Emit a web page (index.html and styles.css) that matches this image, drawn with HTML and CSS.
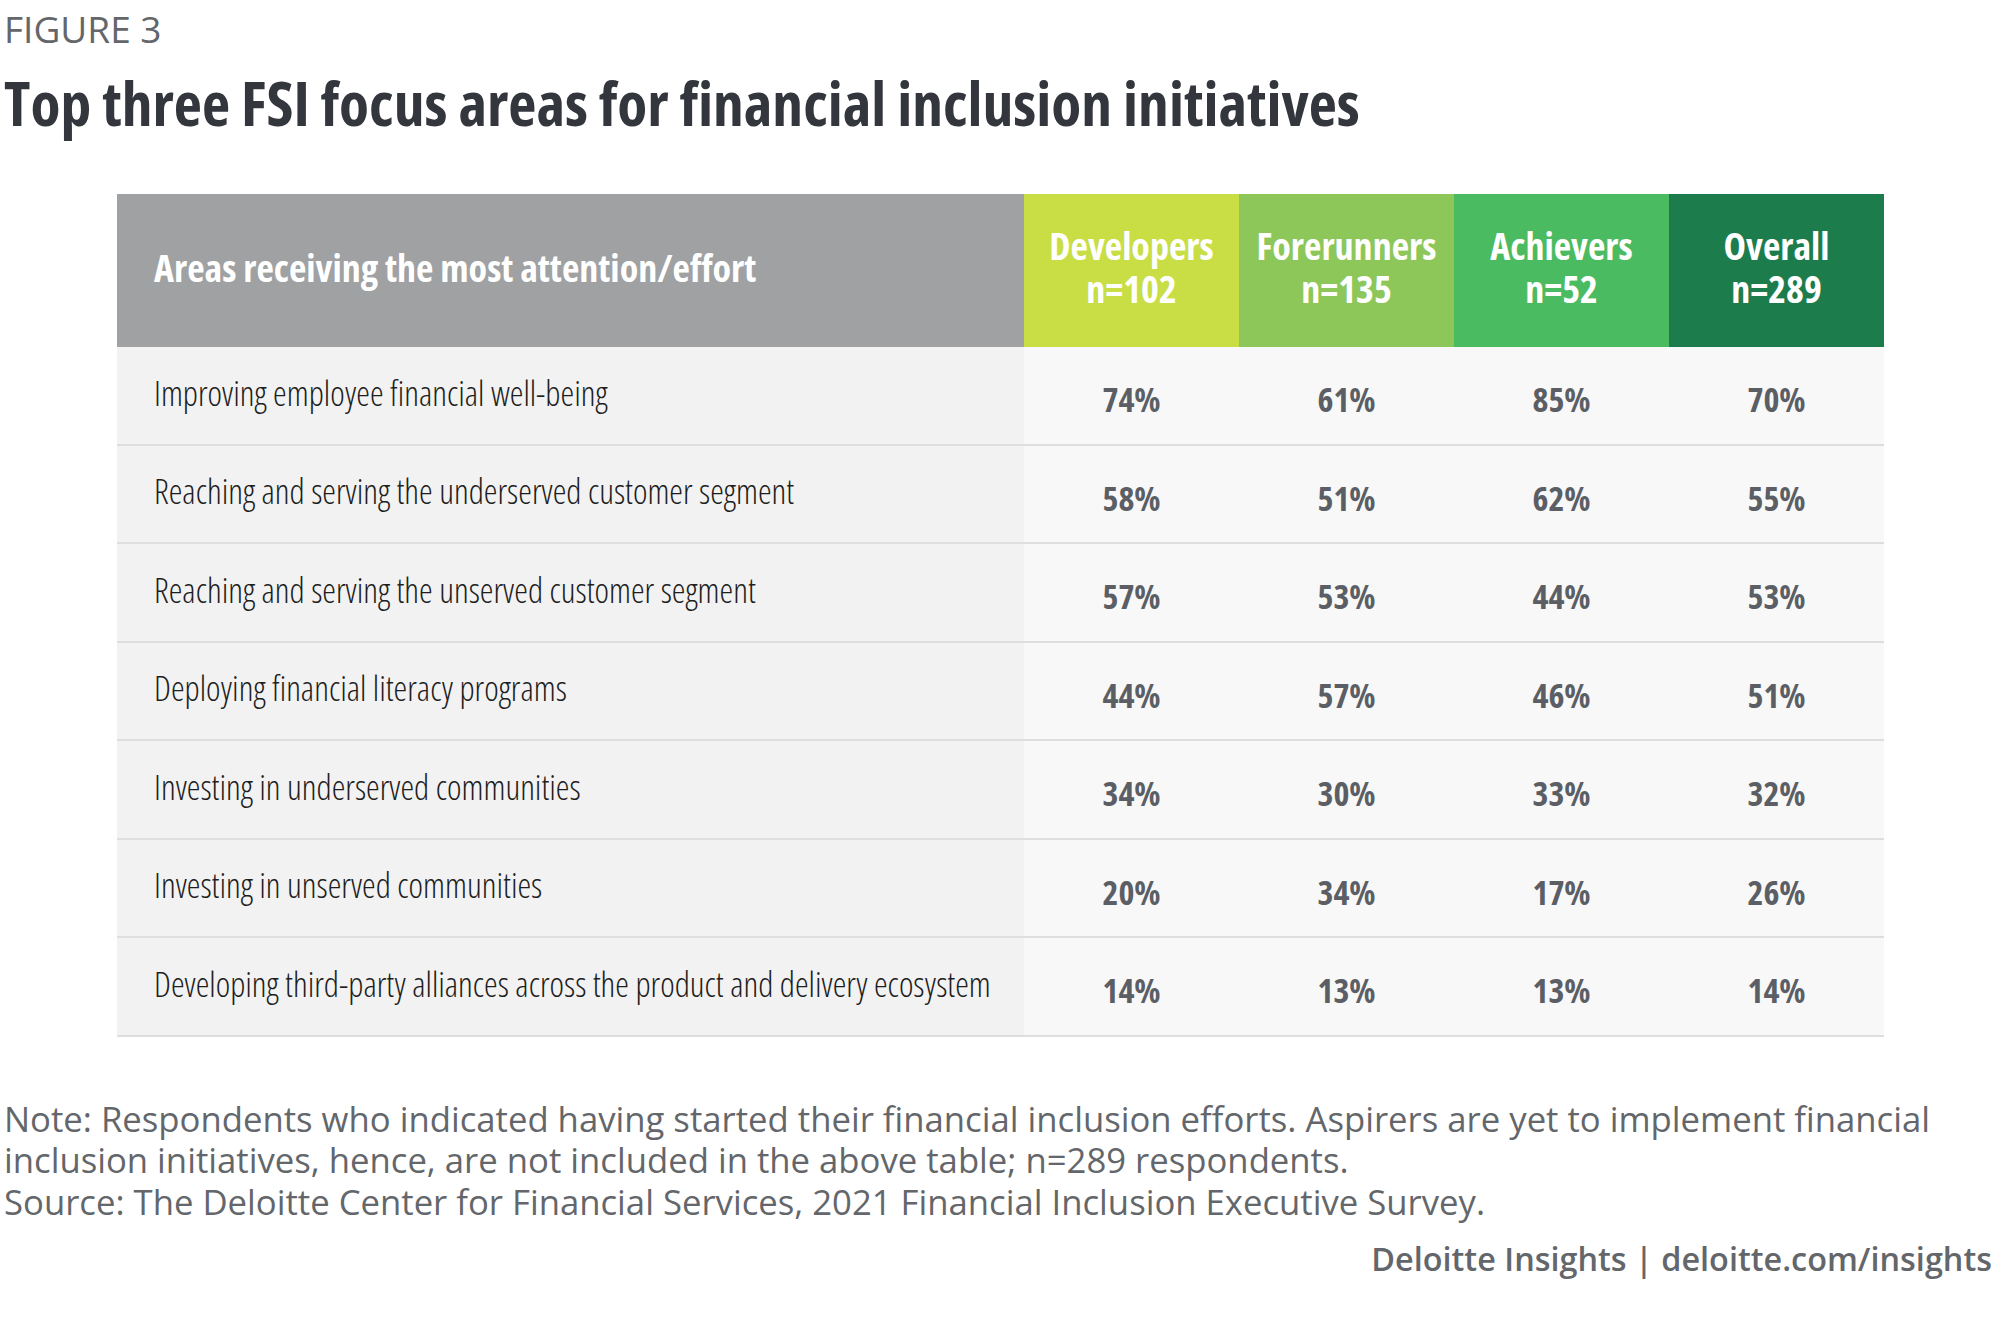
FILE: index.html
```html
<!DOCTYPE html>
<html lang="en">
<head>
<meta charset="utf-8">
<title>Figure 3</title>
<link rel="stylesheet" href="styles.css">
</head>
<body>
<div class="page">
  <div class="fig-label">FIGURE 3</div>
  <h1 class="title">Top three FSI focus areas for financial inclusion initiatives</h1>

  <div class="table">
    <div class="hcell hlabel">Areas receiving the most attention/effort</div>
    <div class="hcell hnum dev"><span>Developers</span><span>n=102</span></div>
    <div class="hcell hnum fore"><span>Forerunners</span><span>n=135</span></div>
    <div class="hcell hnum ach"><span>Achievers</span><span>n=52</span></div>
    <div class="hcell hnum all"><span>Overall</span><span>n=289</span></div>

    <div class="cell label">Improving employee financial well-being</div>
    <div class="cell num">74%</div><div class="cell num">61%</div><div class="cell num">85%</div><div class="cell num">70%</div>

    <div class="cell label">Reaching and serving the underserved customer segment</div>
    <div class="cell num">58%</div><div class="cell num">51%</div><div class="cell num">62%</div><div class="cell num">55%</div>

    <div class="cell label">Reaching and serving the unserved customer segment</div>
    <div class="cell num">57%</div><div class="cell num">53%</div><div class="cell num">44%</div><div class="cell num">53%</div>

    <div class="cell label">Deploying financial literacy programs</div>
    <div class="cell num">44%</div><div class="cell num">57%</div><div class="cell num">46%</div><div class="cell num">51%</div>

    <div class="cell label">Investing in underserved communities</div>
    <div class="cell num">34%</div><div class="cell num">30%</div><div class="cell num">33%</div><div class="cell num">32%</div>

    <div class="cell label">Investing in unserved communities</div>
    <div class="cell num">20%</div><div class="cell num">34%</div><div class="cell num">17%</div><div class="cell num">26%</div>

    <div class="cell label">Developing third-party alliances across the product and delivery ecosystem</div>
    <div class="cell num">14%</div><div class="cell num">13%</div><div class="cell num">13%</div><div class="cell num">14%</div>
  </div>

  <div class="notes">
    <p>Note: Respondents who indicated having started their financial inclusion efforts. Aspirers are yet to implement financial inclusion initiatives, hence, are not included in the above table; n=289 respondents.</p>
    <p>Source: The Deloitte Center for Financial Services, 2021 Financial Inclusion Executive Survey.</p>
  </div>

  <div class="credit">Deloitte Insights | deloitte.com/insights</div>
</div>
</body>
</html>
```

FILE: styles.css
```css
html, body {
  margin: 0;
  padding: 0;
  background: #ffffff;
}

body {
  font-family: "Open Sans", "Liberation Sans", sans-serif;
  width: 2000px;
  height: 1324px;
  overflow: hidden;
}

.page {
  padding: 0 8px 0 4px;
}

.fig-label {
  font-size: 37px;
  line-height: 40px;
  padding-top: 9px;
  color: #63666a;
  font-weight: 400;
}

.title {
  margin: 18px 0 0 0;
  font-size: 61.5px;
  line-height: 70px;
  font-weight: 700;
  font-stretch: 75%;
  color: #33363d;
}

.table {
  margin: 57px 0 0 113px;
  width: 1767px;
  display: grid;
  grid-template-columns: 907px 215px 215px 215px 215px;
  font-stretch: 75%;
}

.hcell {
  box-sizing: border-box;
  height: 153px;
  color: #ffffff;
  font-weight: 700;
  font-size: 38px;
  line-height: 43px;
  display: flex;
  align-items: center;
}

.hlabel {
  background: #a0a1a3;
  padding-left: 37px;
  padding-bottom: 6px;
}

.hnum {
  flex-direction: column;
  justify-content: center;
  text-align: center;
  padding-bottom: 8px;
}

.hnum span {
  display: block;
  height: 43px;
}

.dev { background: #c9dd45; }
.fore { background: #8dc75a; }
.ach { background: #4bbb61; }
.all { background: #1c7c4c; }

.cell {
  box-sizing: border-box;
  height: 98.5px;
  border-bottom: 2px solid #dedede;
  display: flex;
  align-items: center;
}

.label {
  background: #f2f2f2;
  padding-left: 37px;
  padding-bottom: 6px;
  font-size: 34.6px;
  font-weight: 300;
  color: #1e1e1e;
}

.num {
  background: #f8f8f8;
  justify-content: center;
  padding-top: 8px;
  font-size: 34px;
  font-weight: 700;
  color: #5b5f65;
}

.notes {
  margin-top: 61px;
  font-size: 34.7px;
  line-height: 41.5px;
  color: #63666a;
}

.notes p {
  margin: 0;
}

.credit {
  margin-top: 16px;
  text-align: right;
  font-size: 32.4px;
  line-height: 40px;
  font-weight: 600;
  color: #63666a;
}
```
